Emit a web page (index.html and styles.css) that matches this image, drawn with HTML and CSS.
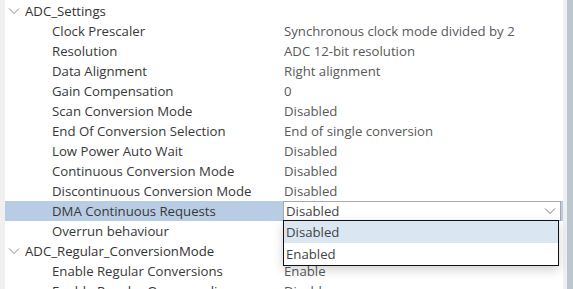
FILE: index.html
```html
<!DOCTYPE html>
<html lang="en">
<head>
    <meta charset="UTF-8">
    <title>ADC Settings</title>
    <link rel="stylesheet" href="styles.css">
</head>
<body>
    <div class="panel">
        <div class="gutter"></div>
        <div class="tree">
            <div class="row group">
                <svg class="chev" width="12" height="8" viewBox="0 0 12 8"><path d="M1 1.5 L6 6.5 L11 1.5" fill="none" stroke="#888" stroke-width="1"/></svg>
                <span class="gname">ADC_Settings</span>
            </div>
            <div class="row"><span class="label">Clock Prescaler</span><span class="value">Synchronous clock mode divided by 2</span></div>
            <div class="row"><span class="label">Resolution</span><span class="value">ADC 12-bit resolution</span></div>
            <div class="row"><span class="label">Data Alignment</span><span class="value">Right alignment</span></div>
            <div class="row"><span class="label">Gain Compensation</span><span class="value">0</span></div>
            <div class="row"><span class="label">Scan Conversion Mode</span><span class="value">Disabled</span></div>
            <div class="row"><span class="label">End Of Conversion Selection</span><span class="value">End of single conversion</span></div>
            <div class="row"><span class="label">Low Power Auto Wait</span><span class="value">Disabled</span></div>
            <div class="row"><span class="label">Continuous Conversion Mode</span><span class="value">Disabled</span></div>
            <div class="row"><span class="label">Discontinuous Conversion Mode</span><span class="value">Disabled</span></div>
            <div class="row selected">
                <span class="label">DMA Continuous Requests</span>
                <div class="combo">
                    <span>Disabled</span>
                    <svg class="combo-chev" width="12" height="8" viewBox="0 0 12 8"><path d="M1 1.5 L6 6.5 L11 1.5" fill="none" stroke="#777" stroke-width="1"/></svg>
                    <div class="popup">
                        <div class="opt active">Disabled</div>
                        <div class="opt">Enabled</div>
                    </div>
                </div>
            </div>
            <div class="row"><span class="label">Overrun behaviour</span><span class="value"></span></div>
            <div class="row group">
                <svg class="chev" width="12" height="8" viewBox="0 0 12 8"><path d="M1 1.5 L6 6.5 L11 1.5" fill="none" stroke="#888" stroke-width="1"/></svg>
                <span class="gname">ADC_Regular_ConversionMode</span>
            </div>
            <div class="row"><span class="label">Enable Regular Conversions</span><span class="value">Enable</span></div>
            <div class="row"><span class="label">Enable Regular Oversampling</span><span class="value">Disable</span></div>
        </div>
        <div class="scrollbar"><div class="thumb"></div></div>
    </div>
</body>
</html>
```

FILE: styles.css
```css
html, body { margin: 0; padding: 0; background: #fff; overflow: hidden; }
body { font-family: "Open Sans", "Noto Sans", sans-serif; font-size: 13.2px; color: #383838; }
.panel { display: flex; width: 573px; height: 289px; }
.gutter { width: 5px; background: #f0f0f0; flex: none; }
.tree { flex: 1; padding-top: 1px; }
.row { display: flex; align-items: center; height: 20px; white-space: nowrap; }
.group .chev { margin-left: 3px; margin-right: 5px; }
.gname { color: #333; }
.label { width: 232px; padding-left: 47px; flex: none; color: #383838; }
.value { color: #595959; }
.selected { background: #b8cde4; }
.combo { position: relative; flex: none; width: 274px; height: 18px; margin-left: -1px; border: 1px solid #a8a8a8; background: #fff; display: flex; align-items: center; padding-left: 2px; box-sizing: content-box; color: #444; }
.combo-chev { margin-left: auto; margin-right: 4px; }
.popup { position: absolute; left: -1px; top: 18px; width: 274px; border: 1px solid #111; background: #fff; box-shadow: 0 4px 10px rgba(0,0,0,0.18); z-index: 2; }
.opt { height: 22px; line-height: 22px; padding-left: 2px; color: #444; }
.opt.active { background: #dae7f3; }
.scrollbar { width: 10px; flex: none; display: flex; }
.scrollbar::before { content: ""; width: 4px; background: #eef0f2; }
.thumb { flex: 1; background: #bcc6ce; }
```
